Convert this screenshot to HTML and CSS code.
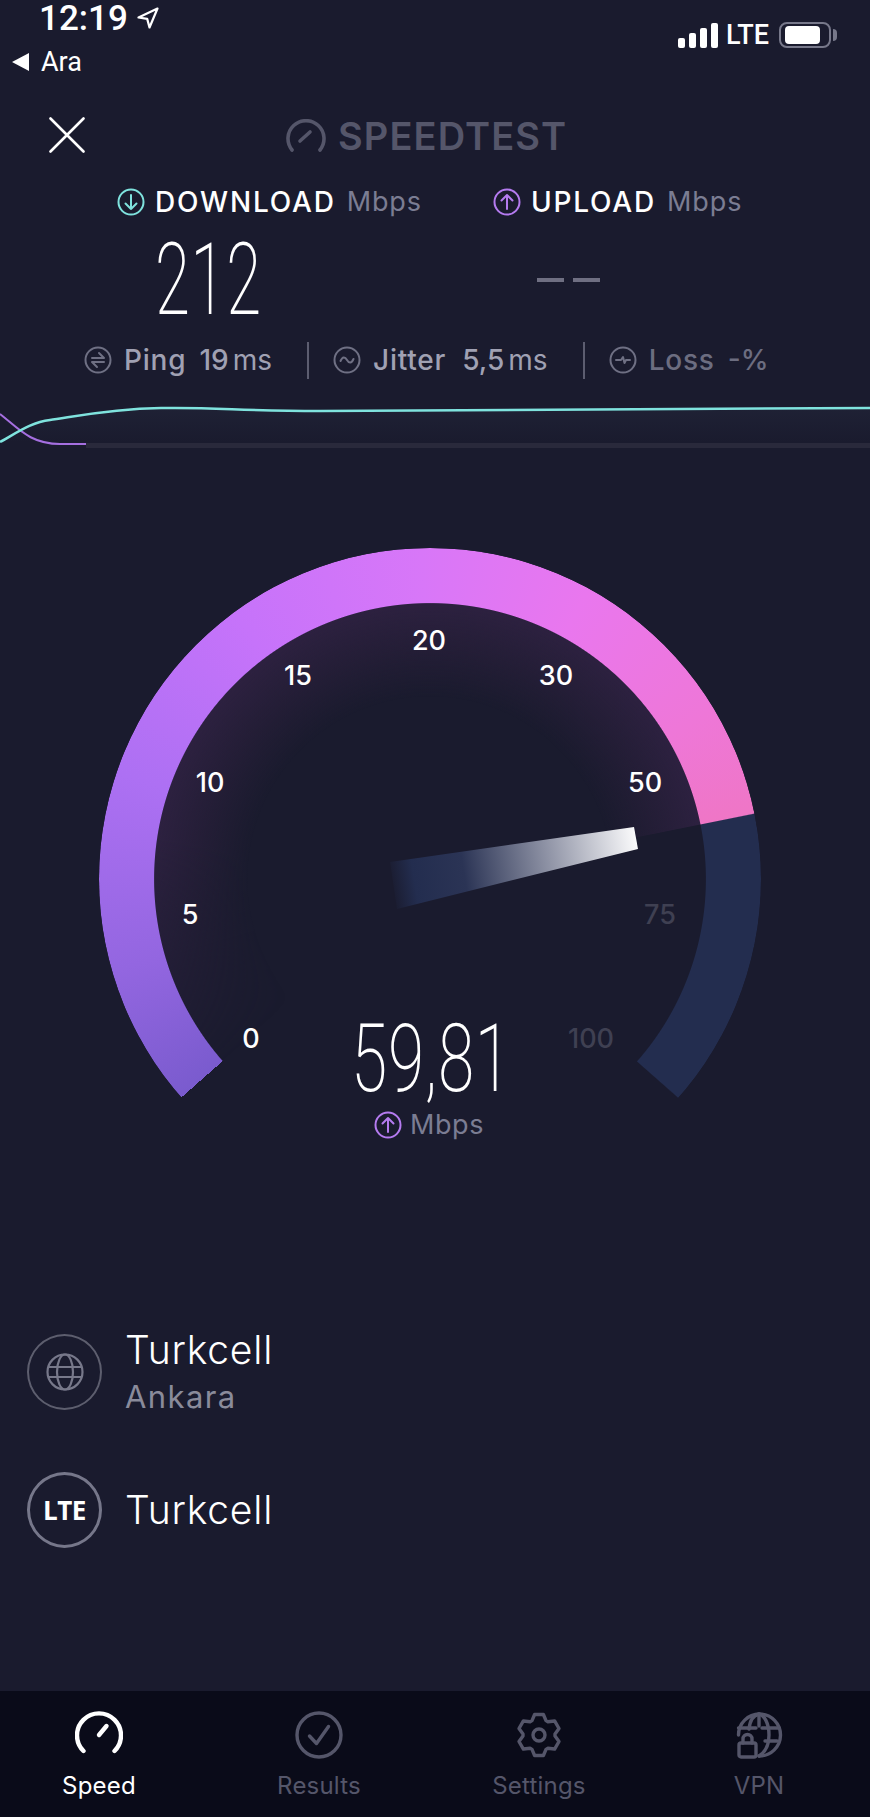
FILE: index.html
```html
<!DOCTYPE html>
<html lang="tr">
<head>
<meta charset="utf-8">
<title>Speedtest</title>
<link rel="stylesheet" href="styles.css">
</head>
<body>
<div class="page">
  <header class="status">
    <div class="status-left">
      <div class="time-row">
        <span class="time">12:19</span>
        <svg class="loc" viewBox="0 0 22 22"><path d="M20.500 1.500 1.500 10.500l8.700 1.400L12.500 20.500z"/></svg>
      </div>
      <div class="back-row">
        <span class="back-tri"></span>
        <span class="back">Ara</span>
      </div>
    </div>
    <div class="status-right">
      <div class="bars"><i class="b1"></i><i class="b2"></i><i class="b3"></i><i class="b4"></i></div>
      <span class="net">LTE</span>
      <div class="battery"><span class="batt-fill"></span></div>
      <span class="batt-nub"></span>
    </div>
  </header>

  <div class="topbar">
    <svg class="close" viewBox="0 0 36 36"><path d="M1.500 1.500 34.500 34.500M34.500 1.500 1.500 34.500"/></svg>
    <div class="logo">
      <svg class="logo-icon" viewBox="0 0 40 34"><path d="M6 31A18 18 0 1 1 34 31"/><path d="M14 22 24 13"/></svg>
      <span class="logo-text">SPEEDTEST</span>
    </div>
  </div>

  <div class="rates">
    <div class="rate">
      <svg class="ic ic-cyan" viewBox="0 0 28 28"><circle cx="14" cy="14" r="12.500"/><path d="M14 7v14M8.500 15.500 14 21l5.500-5.500"/></svg>
      <span class="rate-name">DOWNLOAD</span><span class="rate-unit">Mbps</span>
    </div>
    <div class="rate">
      <svg class="ic ic-purple" viewBox="0 0 28 28"><circle cx="14" cy="14" r="12.500"/><path d="M14 21V7M8.500 12.500 14 7l5.500 5.500"/></svg>
      <span class="rate-name">UPLOAD</span><span class="rate-unit">Mbps</span>
    </div>
  </div>

  <div class="values">
    <span class="big big-dl">212</span>
    <div class="dashes"><i></i><i></i></div>
  </div>

  <div class="stats">
    <div class="stat stat-tight">
      <svg class="ic ic-grey" viewBox="0 0 28 28"><circle cx="14" cy="14" r="12.500"/><path d="M8 12h12l-5-5M20 16H8l5 5"/></svg>
      <span class="stat-name">Ping</span><span class="stat-val">19<small>ms</small></span>
    </div>
    <span class="sep"></span>
    <div class="stat">
      <svg class="ic ic-grey" viewBox="0 0 28 28"><circle cx="14" cy="14" r="12.500"/><path d="M7.500 15c2-4.500 4.500-4.500 6.500-1s4.500 3.500 6.500-1"/></svg>
      <span class="stat-name">Jitter</span><span class="stat-val">5,5<small>ms</small></span>
    </div>
    <span class="sep"></span>
    <div class="stat stat-dim stat-tight">
      <svg class="ic ic-grey" viewBox="0 0 28 28"><circle cx="14" cy="14" r="12.500"/><path d="M7 14h5l2-3 1.500 6 1.500-3h4"/></svg>
      <span class="stat-name">Loss</span><span class="stat-val">-%</span>
    </div>
  </div>

  <svg class="graph" viewBox="0 0 870 60" preserveAspectRatio="none">
    <defs>
      <linearGradient id="gfade" x1="0" y1="0" x2="0" y2="1">
        <stop offset="0" stop-color="#2a3045" stop-opacity=".3"/>
        <stop offset="1" stop-color="#2a3045" stop-opacity="0"/>
      </linearGradient>
    </defs>
    <path d="M0 42C18 32 32 22 50 20S105 9 161 8 240 11 320 11 600 8 870 8V42H0z" fill="url(#gfade)"/>
    <rect x="86" y="43" width="784" height="5" fill="#29293b"/>
    <path d="M0 14C18 28 30 44 60 44H86" fill="none" stroke="#a56fe0" stroke-width="2"/>
    <path d="M0 42C18 32 32 22 50 20S105 9 161 8 240 11 320 11 600 8 870 8" fill="none" stroke="#7fe3de" stroke-width="2.500"/>
  </svg>

  <section class="gauge">
    <div class="dial-glow"></div>
    <div class="dial"></div>
    <svg class="needle" viewBox="0 0 260 90">
      <defs>
        <linearGradient id="ng" gradientUnits="userSpaceOnUse" x1="0" y1="60" x2="248" y2="20">
          <stop offset="0" stop-color="#232d4f" stop-opacity="0"/>
          <stop offset=".1" stop-color="#232d4f"/>
          <stop offset=".3" stop-color="#2b3455"/>
          <stop offset=".65" stop-color="#9296a8"/>
          <stop offset="1" stop-color="#fbfbfc"/>
        </linearGradient>
      </defs>
      <path d="M0 35 244 0 248 22 7 82z" fill="url(#ng)"/>
    </svg>
    <span class="tick t0">0</span>
    <span class="tick t5">5</span>
    <span class="tick t10">10</span>
    <span class="tick t15">15</span>
    <span class="tick t20">20</span>
    <span class="tick t30">30</span>
    <span class="tick t50">50</span>
    <span class="tick t75 off">75</span>
    <span class="tick t100 off">100</span>
    <span class="big big-cur">59,81</span>
    <div class="cur-unit">
      <svg class="ic ic-purple" viewBox="0 0 28 28"><circle cx="14" cy="14" r="12.500"/><path d="M14 21V7M8.500 12.500 14 7l5.500 5.500"/></svg>
      <span>Mbps</span>
    </div>
  </section>

  <section class="providers">
    <div class="prov">
      <div class="badge">
        <svg class="globe" viewBox="0 0 38 38"><circle cx="19" cy="19" r="17.500"/><ellipse cx="19" cy="19" rx="8" ry="17.500"/><path d="M2.500 14h33M2.500 24h33"/></svg>
      </div>
      <div class="prov-text">
        <span class="prov-name">Turkcell</span>
        <span class="prov-sub">Ankara</span>
      </div>
    </div>
    <div class="prov">
      <div class="badge badge-lte"><span>LTE</span></div>
      <div class="prov-text"><span class="prov-name">Turkcell</span></div>
    </div>
  </section>

  <nav class="nav">
    <div class="tab active">
      <svg class="tab-icon" viewBox="0 0 48 48"><path d="M8.500 40A22 22 0 1 1 39.500 40"/><path d="M24 24 31.500 15"/></svg>
      <span>Speed</span>
    </div>
    <div class="tab">
      <svg class="tab-icon" viewBox="0 0 48 48"><circle cx="24" cy="24" r="22"/><path d="M14.500 25 21.500 32.500 33.500 15.500"/></svg>
      <span>Results</span>
    </div>
    <div class="tab">
      <svg class="tab-icon" viewBox="0 0 48 48"><path d="M19.600 3.500H28.400L31 9.600 32.900 10.700 39.600 9.950 44 17.500 40 22.900V25.100L44 30.500 39.600 38.050 32.900 37.300 31 38.400 28.400 44.500H19.600L17 38.400 15.100 37.300 8.400 38.050 4 30.500 8 25.100V22.900L4 17.500 8.400 9.950 15.100 10.700 17 9.600z"/><circle cx="24" cy="24" r="6"/></svg>
      <span>Settings</span>
    </div>
    <div class="tab">
      <svg class="tab-icon" viewBox="0 0 48 48"><path d="M3.500 24A21 21 0 1 1 24 45"/><path d="M14 18C15 9 19 4 24 3 29 4 34 12 34 24S29 42 24 45"/><path d="M24 3V15M3.500 17H21M27 17H44M30 30H42"/><rect x="4" y="32" width="17" height="14" rx="2"/><path d="M8 32V28A4.500 4.500 0 0 1 17 28V32"/></svg>
      <span>VPN</span>
    </div>
  </nav>
</div>
</body>
</html>
```
FILE: styles.css
```css
* { box-sizing: border-box; margin: 0; padding: 0; }
html, body { width: 870px; height: 1817px; overflow: hidden; background: #1a1b2e; }
body { font-family: Inter, "Open Sans", sans-serif; color: #fff; }
.page { width: 870px; height: 1817px; display: flex; flex-direction: column; position: relative; overflow: hidden; }

/* status bar */
.status { height: 96px; display: flex; justify-content: space-between; flex: none; }
.status-left { padding-left: 12px; }
.time-row { display: flex; align-items: center; height: 38px; padding-left: 27px; gap: 9px; }
.time { font: 500 35px/38px Roboto, sans-serif; }
.loc { width: 22px; height: 22px; margin-top: -2px; flex: none; }
.loc path { fill: none; stroke: #fff; stroke-width: 2.2; stroke-linejoin: round; }
.back-row { display: flex; align-items: center; gap: 12px; margin-top: 9px; height: 30px; }
.back-tri { width: 0; height: 0; border-style: solid; border-width: 9px 17px 9px 0; border-color: transparent #fff transparent transparent; }
.back { font: 400 27px/30px Roboto, sans-serif; }
.status-right { display: flex; align-items: center; height: 70px; padding-right: 33px; }
.bars { display: flex; align-items: flex-end; gap: 4px; height: 25px; margin-top: 1px; }
.bars i { display: block; width: 7px; background: #fff; border-radius: 2px; }
.b1 { height: 10px; } .b2 { height: 15px; } .b3 { height: 20px; } .b4 { height: 25px; }
.net { font: 500 27px/30px Roboto, sans-serif; margin-left: 8px; width: 48px; }
.battery { width: 52px; height: 26px; border: 2px solid #77788a; border-radius: 8px; padding: 2px 9px 2px 4px; margin-left: 5px; }
.batt-fill { display: block; width: 100%; height: 100%; background: #fff; border-radius: 4px; }
.batt-nub { width: 4px; height: 12px; background: #77788a; border-radius: 0 4px 4px 0; margin-left: 2px; }

/* top bar */
.topbar { height: 80px; flex: none; display: flex; align-items: center; padding: 0 0 3px 49px; }
.close { width: 36px; height: 36px; flex: none; }
.close path { stroke: #fff; stroke-width: 2.6; stroke-linecap: round; fill: none; }
.logo { display: flex; align-items: center; gap: 12px; margin-left: 201px; padding-top: 3px; }
.logo-icon { width: 40px; height: 34px; }
.logo-icon path { fill: none; stroke: #55566a; stroke-width: 3.6; stroke-linecap: round; }
.logo-text { font: 600 38px/40px Inter, sans-serif; color: #55566a; letter-spacing: 1.1px; white-space: nowrap; }

/* rates */
.rates { display: flex; padding-left: 117px; gap: 71px; height: 44px; flex: none; align-items: center; margin-top: 4px; }
.rate { display: flex; align-items: center; }
.ic { width: 28px; height: 28px; flex: none; }
.ic circle, .ic path { fill: none; stroke-width: 2; stroke-linecap: round; stroke-linejoin: round; }
.ic-cyan circle, .ic-cyan path { stroke: #7fe3de; }
.ic-purple circle, .ic-purple path { stroke: #b57bf0; }
.ic-grey circle, .ic-grey path { stroke: #6f7084; }
.rate-name { font: 500 28px/30px Inter, sans-serif; margin-left: 10px; letter-spacing: 1.8px; }
.rate-unit { font: 400 27px/30px Inter, sans-serif; margin-left: 11px; color: #7b7d93; letter-spacing: .9px; }

/* values */
.values { display: flex; align-items: center; height: 94px; padding: 18px 0 0 155px; flex: none; }
.big { font-family: Roboto, sans-serif; font-weight: 200; color: #fff; display: inline-block; transform-origin: 0 50%; white-space: nowrap; }
.big-dl { font-size: 100px; line-height: 94px; width: 100px; flex: none; transform: scaleX(.635); letter-spacing: 1px; }
.dashes { display: flex; gap: 9px; margin-left: 282px; }
.dashes i { display: block; width: 27px; height: 4px; background: #6f6f82; }

/* stats */
.stats { display: flex; align-items: center; height: 40px; padding-left: 84px; flex: none; margin-top: 22px; }
.stat { display: flex; align-items: center; }
.stat-name { font: 500 28px/30px Inter, sans-serif; color: #a0a1b3; margin-left: 12px; letter-spacing: .8px; }
.stat-val { font: 500 28px/30px Inter, sans-serif; color: #a0a1b3; margin-left: 16px; }
.stat-tight .stat-val { margin-left: 13px; }
.stat-val small { font-size: 28px; margin-left: 4px; font-weight: 400; }
.stat-dim .stat-name, .stat-dim .stat-val { color: #6c6d80; }
.sep { width: 2px; height: 37px; background: #5c5d70; margin: 0 24px 0 35px; }

/* graph */
.graph { width: 870px; height: 60px; flex: none; margin-top: 20px; display: block; }

/* gauge */
.gauge { position: relative; height: 720px; flex: none; }
.dial { position: absolute; left: 99px; top: 88px; width: 662px; height: 662px; border-radius: 50%;
  background: conic-gradient(from 228.7deg, #7a5bce 0deg, #9366e0 25deg, #ad70f3 60deg, #c673fa 95deg, #d877f8 130deg, #e977ee 160deg, #ee77d8 190deg, #ef76c6 209.8deg, #232d4f 210deg, #232d4f 262.6deg, transparent 262.8deg);
  -webkit-mask: radial-gradient(closest-side, transparent 83.2%, #000 83.5%);
  mask: radial-gradient(closest-side, transparent 83.2%, #000 83.5%); }
.dial-glow { position: absolute; left: 154px; top: 143px; width: 552px; height: 552px; border-radius: 50%;
  background: radial-gradient(closest-side, rgba(47,33,64,0) 66%, rgba(47,33,64,.5) 84%, #2d2140 100%);
  -webkit-mask: conic-gradient(from 228.7deg, transparent 0deg, #000 50deg, #000 209.8deg, transparent 210deg);
  mask: conic-gradient(from 228.7deg, transparent 0deg, #000 50deg, #000 209.8deg, transparent 210deg); }
.needle { position: absolute; left: 390px; top: 367px; width: 260px; height: 90px; }
.tick { position: absolute; font: 500 27px/30px Inter, sans-serif; color: #fff; transform: translate(-50%, -50%); }
.tick.off { color: #3f4052; }
.t0 { left: 251px; top: 579px; } .t5 { left: 190px; top: 455px; } .t10 { left: 210px; top: 323px; }
.t15 { left: 298px; top: 216px; } .t20 { left: 429px; top: 181px; } .t30 { left: 556px; top: 216px; }
.t50 { left: 645px; top: 323px; } .t75 { left: 660px; top: 455px; } .t100 { left: 591px; top: 579px; }
.big-cur { position: absolute; left: 351px; top: 544px; font-size: 94px; line-height: 110px; transform: scaleX(.7); letter-spacing: 1px; }
.cur-unit { position: absolute; left: 374px; top: 650px; display: flex; align-items: center; gap: 8px; font: 400 27px/30px Inter, sans-serif; color: #7b7d93; letter-spacing: .6px; }

/* providers */
.providers { display: flex; flex-direction: column; gap: 62px; padding-left: 27px; margin-top: 154px; flex: none; }
.prov { display: flex; align-items: center; gap: 23px; height: 76px; }
.badge { width: 75px; height: 76px; border: 2.5px solid #5d5e6e; border-radius: 50%; display: flex; align-items: center; justify-content: center; flex: none; }
.badge-lte { border: 3px solid #76778a; }
.badge-lte span { font: 700 26px/30px "Open Sans", sans-serif; letter-spacing: -.5px; }
.globe { width: 38px; height: 38px; }
.globe circle, .globe ellipse, .globe path { fill: none; stroke: #77788a; stroke-width: 2.2; }
.prov-text { display: flex; flex-direction: column; }
.prov-name { font: 300 39px/50px Inter, sans-serif; color: #fff; letter-spacing: .8px; }
.prov-sub { font: 400 31px/36px Inter, sans-serif; color: #8a8b9b; letter-spacing: 1.4px; margin: 4px 0; }

/* nav */
.nav { margin-top: auto; height: 126px; background: #0a0b19; display: grid; grid-template-columns: repeat(4, 220px); margin-left: -11px; width: 881px; flex: none; padding-top: 20px; }
.tab { display: flex; flex-direction: column; align-items: center; color: #55566a; font: 400 24px/28px Inter, sans-serif; gap: 13px; letter-spacing: .2px; }
.tab-icon { width: 48px; height: 48px; }
.tab-icon path, .tab-icon circle, .tab-icon rect { fill: none; stroke: #55566a; stroke-width: 3.4; stroke-linecap: round; stroke-linejoin: round; }
.active { color: #fff; }
.active .tab-icon path { stroke: #fff; stroke-width: 4.4; }
```
